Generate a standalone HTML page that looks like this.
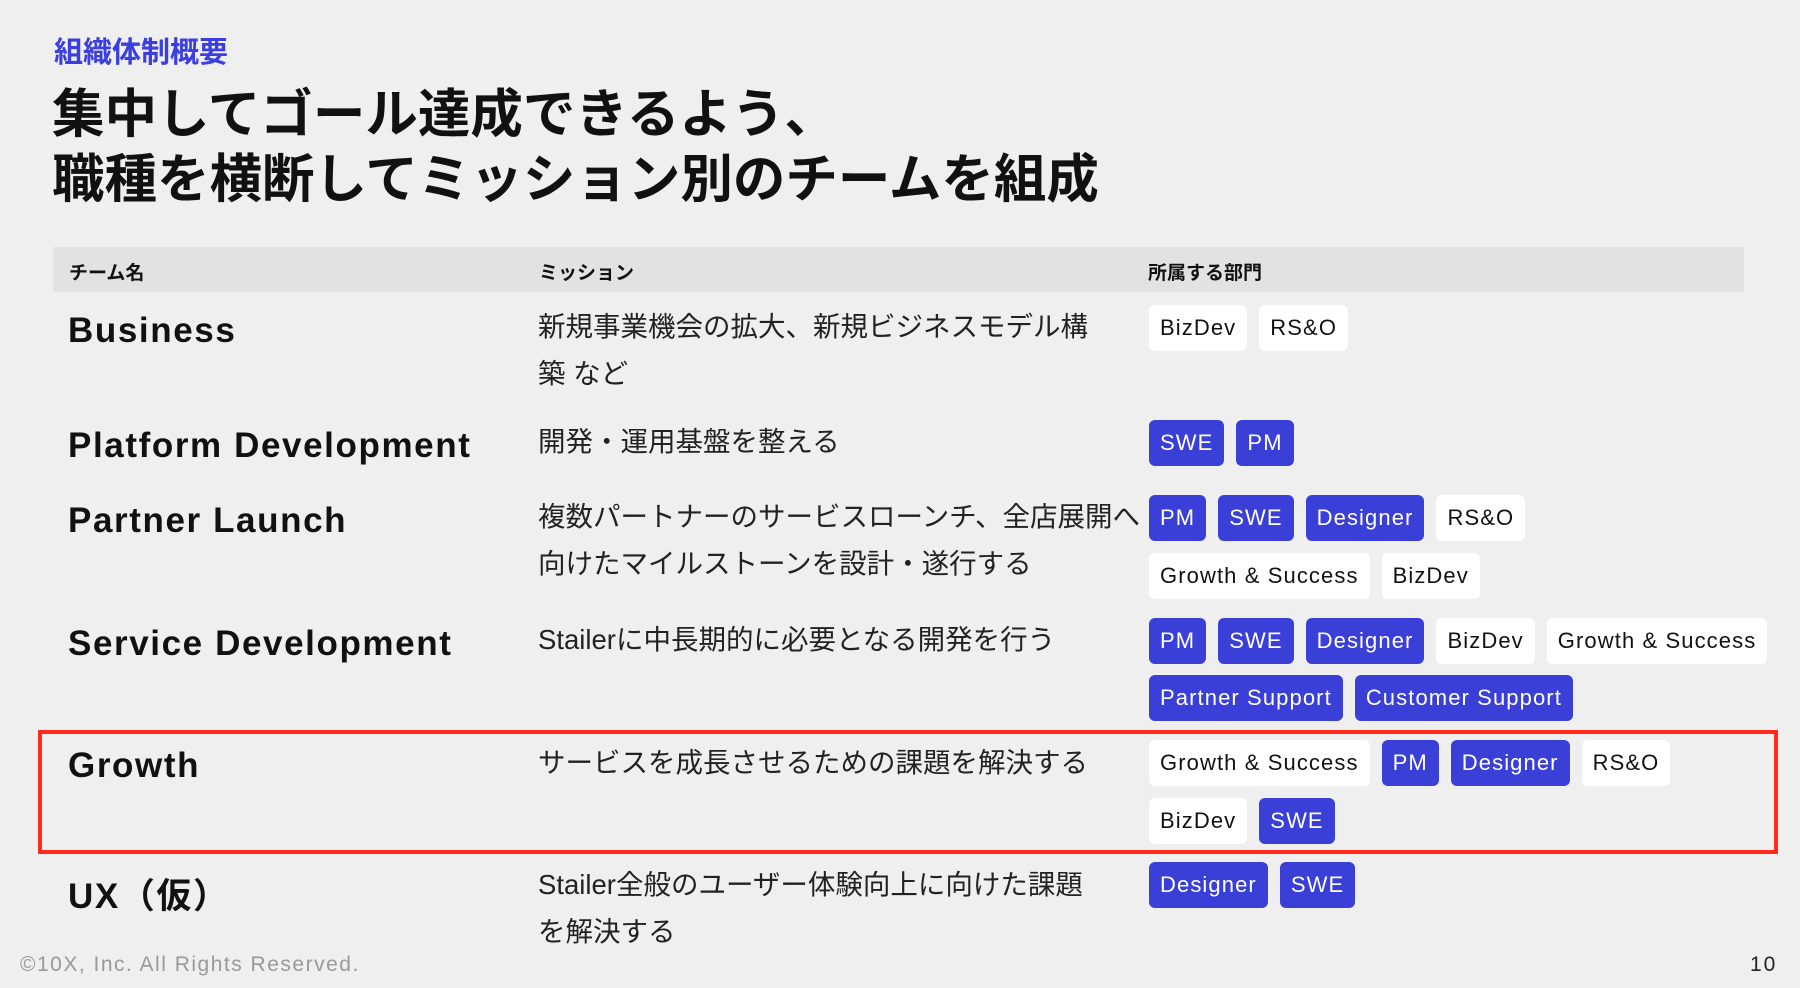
<!DOCTYPE html>
<html><head><meta charset="utf-8"><style>
*{margin:0;padding:0;box-sizing:border-box}
body{width:1800px;height:988px;background:#efefef;position:relative;overflow:hidden;font-family:"Liberation Sans","Noto Sans CJK JP",sans-serif;color:#111}
.a{position:absolute;white-space:nowrap}
.sub{left:54px;top:29px;font-size:29px;font-weight:700;color:#3b3fe0}
.t{left:52px;font-size:52.5px;font-weight:700;line-height:64px}
.hd{left:53px;top:247px;width:1691px;height:45px;background:#e2e2e2}
.hdt{top:258px;font-size:19px;font-weight:700}
.nm{left:68px;font-size:35px;font-weight:700;letter-spacing:1.6px}
.ms{left:538px;font-size:27.5px;line-height:47px;color:#222}
.tg{position:absolute;height:46px;display:flex;gap:12px}
.tg span{display:inline-block;height:46px;line-height:46px;padding:0 11px;border-radius:6px;background:#fff;font-size:22px;color:#111;letter-spacing:1.1px}
.tg span.b{background:#3a3fd8;color:#fff}
.red{left:38px;top:730px;width:1740px;height:124px;border:4px solid #ff2a1a}
</style></head><body>
<div class="a sub">組織体制概要</div>
<div class="a t" style="top:83px">集中してゴール達成できるよう、</div>
<div class="a t" style="top:148px">職種を横断してミッション別のチームを組成</div>
<div class="a hd"></div>
<div class="a hdt" style="left:69px">チーム名</div>
<div class="a hdt" style="left:539px">ミッション</div>
<div class="a hdt" style="left:1148px">所属する部門</div>

<div class="a nm" style="top:311px">Business</div>
<div class="a ms" style="top:303px">新規事業機会の拡大、新規ビジネスモデル構<br>築 など</div>
<div class="tg" style="left:1149px;top:305px"><span>BizDev</span><span>RS&amp;O</span></div>

<div class="a nm" style="top:426px">Platform Development</div>
<div class="a ms" style="top:418px">開発・運用基盤を整える</div>
<div class="tg" style="left:1149px;top:420px"><span class="b">SWE</span><span class="b">PM</span></div>

<div class="a nm" style="top:501px">Partner Launch</div>
<div class="a ms" style="top:493px">複数パートナーのサービスローンチ、全店展開へ<br>向けたマイルストーンを設計・遂行する</div>
<div class="tg" style="left:1149px;top:495px"><span class="b">PM</span><span class="b">SWE</span><span class="b">Designer</span><span>RS&amp;O</span></div>
<div class="tg" style="left:1149px;top:553px"><span>Growth &amp; Success</span><span>BizDev</span></div>

<div class="a nm" style="top:624px">Service Development</div>
<div class="a ms" style="top:616px">Stailerに中長期的に必要となる開発を行う</div>
<div class="tg" style="left:1149px;top:618px"><span class="b">PM</span><span class="b">SWE</span><span class="b">Designer</span><span>BizDev</span><span>Growth &amp; Success</span></div>
<div class="tg" style="left:1149px;top:675px"><span class="b">Partner Support</span><span class="b">Customer Support</span></div>

<div class="a nm" style="top:746px">Growth</div>
<div class="a ms" style="top:739px">サービスを成長させるための課題を解決する</div>
<div class="tg" style="left:1149px;top:740px"><span>Growth &amp; Success</span><span class="b">PM</span><span class="b">Designer</span><span>RS&amp;O</span></div>
<div class="tg" style="left:1149px;top:798px"><span>BizDev</span><span class="b">SWE</span></div>
<div class="a red"></div>

<div class="a nm" style="top:868px">UX（仮）</div>
<div class="a ms" style="top:861px">Stailer全般のユーザー体験向上に向けた課題<br>を解決する</div>
<div class="tg" style="left:1149px;top:862px"><span class="b">Designer</span><span class="b">SWE</span></div>

<div class="a" style="left:20px;top:953px;font-size:21px;color:#999;letter-spacing:1.5px">©10X, Inc. All Rights Reserved.</div>
<div class="a" style="left:1750px;top:953px;font-size:21px;color:#222;letter-spacing:2px">10</div>
</body></html>
